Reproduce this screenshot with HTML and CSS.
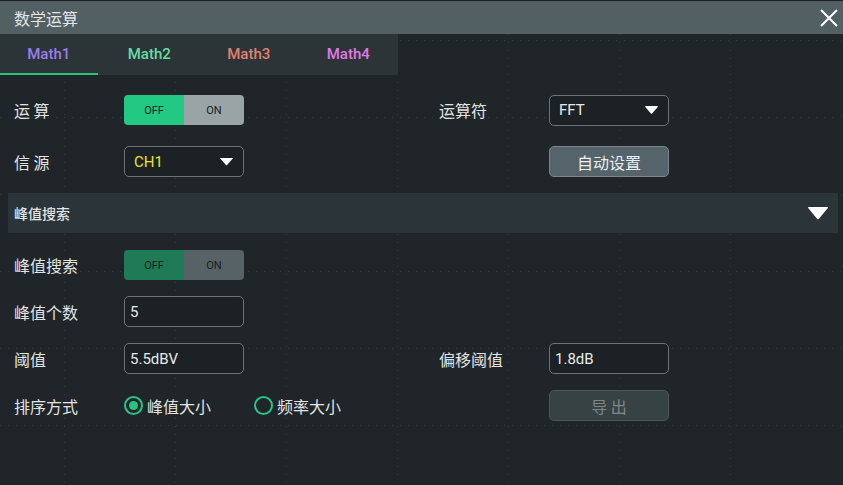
FILE: index.html
```html
<!DOCTYPE html>
<html>
<head lang="zh">
    <meta charset="UTF-8">
    <title>数学运算</title>
    <link rel="stylesheet" href="styles.css">
</head>
<body>
    <div id="dialog">
        <div id="title-bar">
            <span id="title">数学运算</span>
            <svg id="close" width="18" height="18" viewBox="0 0 18 18">
                <path d="M1 1L17 17M17 1L1 17" stroke="#ffffff" stroke-width="2" fill="none"/>
            </svg>
        </div>
        <div id="content">
            <ul id="tabs">
                <li class="tab m1 active">Math1</li>
                <li class="tab m2">Math2</li>
                <li class="tab m3">Math3</li>
                <li class="tab m4">Math4</li>
            </ul>
            <div class="form top-form">
                <div class="label">运&nbsp;算</div>
                <div class="switch">
                    <span class="off">OFF</span>
                    <span class="on">ON</span>
                </div>
                <div></div>
                <div class="label">运算符</div>
                <div class="select">
                    <span>FFT</span>
                    <i class="caret"></i>
                </div>

                <div class="label">信&nbsp;源</div>
                <div class="select">
                    <span class="ch1">CH1</span>
                    <i class="caret"></i>
                </div>
                <div></div>
                <div></div>
                <div class="btn">自动设置</div>
            </div>
            <div id="section">
                <span>峰值搜索</span>
                <i class="big-caret"></i>
            </div>
            <div class="form bottom-form">
                <div class="label">峰值搜索</div>
                <div class="switch dim">
                    <span class="off">OFF</span>
                    <span class="on">ON</span>
                </div>
                <div></div>
                <div></div>
                <div></div>

                <div class="label">峰值个数</div>
                <div class="input">5</div>
                <div></div>
                <div></div>
                <div></div>

                <div class="label">阈值</div>
                <div class="input">5.5dBV</div>
                <div></div>
                <div class="label">偏移阈值</div>
                <div class="input">1.8dB</div>

                <div class="label">排序方式</div>
                <div class="radios">
                    <span class="radio checked"><i></i>峰值大小</span>
                    <span class="radio"><i></i>频率大小</span>
                </div>
                <div></div>
                <div class="btn disabled">导&nbsp;出</div>
            </div>
        </div>
    </div>
</body>
</html>
```
FILE: styles.css
```css
*{
    padding: 0;
    margin: 0;
    box-sizing: border-box;
}
ul{
    list-style: none;
}
body{
    background: #1f2528;
    font-family: "Noto Sans CJK SC", "Noto Sans", sans-serif;
    color: #e2e4e4;
}
#dialog{
    width: 843px;
    height: 485px;
    background: #1f2528;
    overflow: hidden;
}
#title-bar{
    height: 34px;
    background: #525f63;
    border-top: 1px solid #1a1f22;
    display: flex;
    align-items: center;
    justify-content: space-between;
    padding: 0 5px 0 14px;
}
#title{
    font-size: 16px;
    color: #e4e6e6;
}
#content{
    position: relative;
    height: 451px;
}
/* faint scope grid behind the dialog */
#content::before,
#content::after{
    content: "";
    position: absolute;
    left: 0;
    top: 0;
    right: 0;
    bottom: 0;
    pointer-events: none;
}
#content::before{
    background: repeating-linear-gradient(to right, transparent 0 64px, rgba(255,255,255,0.1) 64px 65px, transparent 65px 111px);
    background-size: 111px 100%;
    -webkit-mask-image: repeating-linear-gradient(to bottom, #000 0 1px, transparent 1px 8px);
    mask-image: repeating-linear-gradient(to bottom, #000 0 1px, transparent 1px 8px);
}
#content::after{
    background: linear-gradient(to bottom, transparent 0 6px, rgba(255,255,255,0.1) 6px 7px, transparent 7px);
    background-size: 100% 77px;
    -webkit-mask-image: repeating-linear-gradient(to right, #000 0 1px, transparent 1px 8px);
    mask-image: repeating-linear-gradient(to right, #000 0 1px, transparent 1px 8px);
}
#tabs, .form, #section{
    position: relative;
    z-index: 1;
}
#tabs{
    width: 398px;
    height: 41px;
    background: #2c3438;
    display: flex;
}
.tab{
    width: 100px;
    text-align: center;
    font-family: Roboto, "Liberation Sans", sans-serif;
    font-weight: 500;
    font-size: 15px;
    line-height: 40px;
}
.tab.active{
    border-bottom: 2px solid #27c080;
    width: 98px;
    margin-right: 2px;
}
.m1{ color: #9d7ee6; }
.m2{ color: #66dca5; }
.m3{ color: #e2806f; }
.m4{ color: #e07ae3; }
.form{
    display: grid;
    grid-template-columns: 110px 120px 195px 110px 120px;
    align-items: center;
    padding-left: 14px;
}
.top-form{
    padding-top: 20px;
    grid-template-rows: 30px 31px;
    row-gap: 21px;
}
.bottom-form{
    padding-top: 17px;
    grid-template-rows: 30px 31px 31px 31px;
    row-gap: 16px;
}
.label{
    font-size: 16px;
    color: #e2e4e4;
}
.switch{
    height: 30px;
    display: flex;
    border-radius: 4px;
    overflow: hidden;
    font-family: Roboto, "Liberation Sans", sans-serif;
    font-size: 11px;
    color: #17201c;
}
.switch span{
    width: 60px;
    display: flex;
    align-items: center;
    justify-content: center;
}
.switch .off{ background: #22c983; }
.switch .on{ background: #9aa3a5; }
.switch.dim .off{ background: #1e7b56; }
.switch.dim .on{ background: #566265; }
.select, .input{
    height: 31px;
    border: 1px solid #6b7376;
    border-radius: 5px;
    background: #1b2124;
    display: flex;
    align-items: center;
    padding: 0 9px;
    font-family: Roboto, "Liberation Sans", sans-serif;
    font-size: 15px;
    color: #e8eaea;
}
.input{
    padding-left: 5px;
}
.select{
    justify-content: space-between;
}
.ch1{ color: #e6e628; }
.caret{
    width: 13px;
    height: 8px;
    background: #ffffff;
    clip-path: polygon(0 8%, 6% 0, 94% 0, 100% 8%, 56% 92%, 50% 100%, 44% 92%);
    margin-right: 1px;
}
.btn{
    height: 31px;
    border: 1px solid #7a8689;
    border-radius: 5px;
    background: #55636a;
    display: flex;
    align-items: center;
    justify-content: center;
    font-size: 16px;
    color: #eceeee;
}
.btn.disabled{
    background: #374244;
    border-color: #4b5658;
    color: #7d8789;
}
#section{
    margin: 16px 5px 0 8px;
    height: 40px;
    background: #2b3438;
    display: flex;
    align-items: center;
    justify-content: space-between;
    padding: 0 10px 0 6px;
    font-size: 14px;
    font-weight: 500;
}
.big-caret{
    width: 20px;
    height: 13px;
    background: #ffffff;
    clip-path: polygon(0 10%, 3% 0, 97% 0, 100% 10%, 55% 95%, 50% 100%, 45% 95%);
}
.radios{
    grid-column: 2 / 4;
    display: flex;
    font-size: 16px;
    color: #e2e4e4;
}
.radio{
    display: flex;
    align-items: center;
    margin-right: 43px;
}
.radio i{
    width: 19px;
    height: 19px;
    border: 2px solid #28c486;
    border-radius: 50%;
    margin-right: 4px;
    display: flex;
    align-items: center;
    justify-content: center;
}
.radio.checked i::after{
    content: "";
    width: 9px;
    height: 9px;
    border-radius: 50%;
    background: #28c486;
}
```
